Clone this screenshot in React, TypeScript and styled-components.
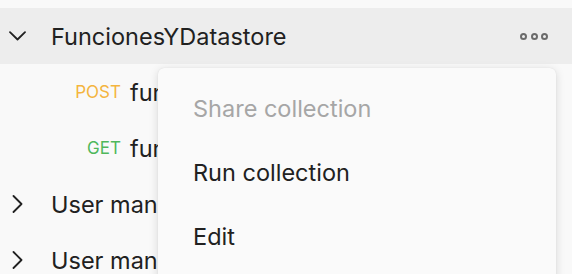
import React from "react";
import styled, { createGlobalStyle } from "styled-components";

const Global = createGlobalStyle`
  html, body { margin: 0; padding: 0; background: #f9f9f9; overflow: hidden; }
  body { font-family: Inter, "Noto Sans", sans-serif; -webkit-font-smoothing: antialiased; }
`;

const Page = styled.div`
  position: relative;
  width: 572px;
  height: 274px;
  padding-top: 8px;
  box-sizing: border-box;
  overflow: hidden;
`;

const Row = styled.div<{ $active?: boolean }>`
  display: flex;
  align-items: center;
  height: 56px;
  padding-left: 9px;
  padding-right: 24px;
  background: ${(p) => (p.$active ? "#ededed" : "transparent")};
  box-sizing: border-box;
`;

const Caret = styled.span`
  width: 17px;
  height: 17px;
  display: flex;
  align-items: center;
  justify-content: center;
  margin-right: 25px;
  color: #212121;
`;

const Name = styled.span`
  font-size: 23.5px;
  color: #212121;
  white-space: nowrap;
  flex: 1;
`;

const RequestRow = styled.div`
  display: flex;
  align-items: center;
  height: 56px;
  padding-left: 66px;
`;

const Method = styled.span<{ $color: string }>`
  width: 55px;
  text-align: right;
  margin-right: 9px;
  font-size: 17px;
  color: ${(p) => p.$color};
`;

const Dots = styled.span`
  display: flex;
  gap: 3.5px;
`;

const Dot = styled.span`
  width: 7px;
  height: 7px;
  box-sizing: border-box;
  border: 2px solid #6b6b6b;
  border-radius: 50%;
`;

const Menu = styled.div`
  position: absolute;
  left: 158px;
  top: 68px;
  width: 398px;
  padding: 8px 0;
  background: #fafafa;
  border-radius: 6px;
  box-shadow: 0 2px 10px rgba(0, 0, 0, 0.14), 0 0 1px rgba(0, 0, 0, 0.12);
`;

const MenuItem = styled.div<{ $disabled?: boolean }>`
  height: 64px;
  display: flex;
  align-items: center;
  padding-left: 35px;
  font-size: 23.5px;
  color: ${(p) => (p.$disabled ? "#a6a6a6" : "#212121")};
`;

const ChevronDown = () => (
  <svg width="17" height="10" viewBox="0 0 17 10" fill="none">
    <path d="M1 1.2 L8.5 8.5 L16 1.2" stroke="#212121" strokeWidth="1.8" strokeLinecap="round" strokeLinejoin="round" />
  </svg>
);

const ChevronRight = () => (
  <svg width="11" height="18" viewBox="0 0 11 18" fill="none">
    <path d="M1.5 1 L9.5 9 L1.5 17" stroke="#212121" strokeWidth="1.8" strokeLinecap="round" strokeLinejoin="round" />
  </svg>
);

export default function App() {
  return (
    <>
      <Global />
      <Page>
        <Row $active>
          <Caret>
            <ChevronDown />
          </Caret>
          <Name>FuncionesYDatastore</Name>
          <Dots>
            <Dot />
            <Dot />
            <Dot />
          </Dots>
        </Row>
        <RequestRow>
          <Method $color="#f4b53f">POST</Method>
          <Name>funcionHola</Name>
        </RequestRow>
        <RequestRow>
          <Method $color="#4fb85c">GET</Method>
          <Name>funcionDatastore</Name>
        </RequestRow>
        <Row>
          <Caret>
            <ChevronRight />
          </Caret>
          <Name>User management</Name>
        </Row>
        <Row>
          <Caret>
            <ChevronRight />
          </Caret>
          <Name>User management API</Name>
        </Row>
        <Menu>
          <MenuItem $disabled>Share collection</MenuItem>
          <MenuItem>Run collection</MenuItem>
          <MenuItem>Edit</MenuItem>
          <MenuItem>Add request</MenuItem>
        </Menu>
      </Page>
    </>
  );
}
